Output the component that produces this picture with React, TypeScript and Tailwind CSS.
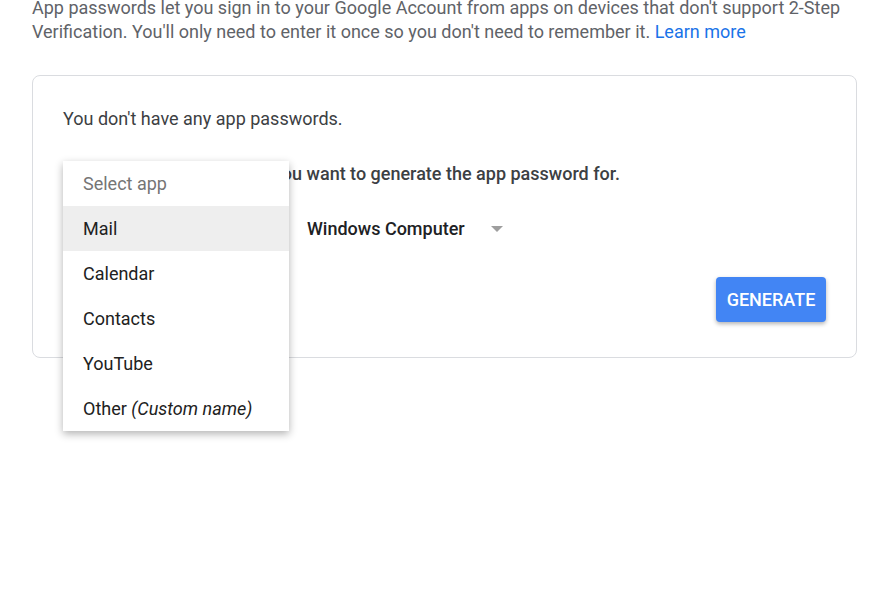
import React from "react";

const apps = ["Mail", "Calendar", "Contacts", "YouTube"];

export default function App() {
  return (
    <div className="w-[895px] h-[595px] overflow-hidden bg-white font-['Roboto',sans-serif] text-[18px]">
      <p className="-mt-1 pl-[32px] pr-[20px] leading-6 text-[#5f6368]">
        App passwords let you sign in to your Google Account from apps on devices that don't support 2-Step
        Verification. You'll only need to enter it once so you don't need to remember it.{" "}
        <a href="#" className="text-[#1a73e8]">
          Learn more
        </a>
      </p>

      <div className="ml-[32px] mt-[31px] w-[825px] rounded-lg border border-[#dadce0] px-[30px] pt-[31px] pb-[35px]">
        <p className="leading-6 text-[#3c4043]">You don't have any app passwords.</p>
        <p className="mt-[31px] leading-6 font-medium text-[#3c4043]">
          Select the app and device you want to generate the app password for.
        </p>

        <div className="relative mt-[20px] flex h-[45px] items-center">
          <div className="w-[244px]" />
          <div className="flex items-center font-medium text-[#202124]">
            <span>Windows Computer</span>
            <span className="ml-[26px] h-0 w-0 border-l-[6px] border-r-[6px] border-t-[6px] border-l-transparent border-r-transparent border-t-[#9e9e9e]" />
          </div>

          <ul className="absolute left-0 top-[-45px] z-10 w-[226px] bg-white shadow-[0_3px_8px_rgba(0,0,0,0.3)]">
            <li className="flex h-[45px] items-center px-5 text-[#757575]">Select app</li>
            {apps.map((a) => (
              <li
                key={a}
                className={`flex h-[45px] items-center px-5 text-[#212121] ${
                  a === "Mail" ? "bg-[#eeeeee]" : ""
                }`}
              >
                {a}
              </li>
            ))}
            <li className="flex h-[45px] items-center px-5 text-[#212121]">
              Other&nbsp;<i>(Custom name)</i>
            </li>
          </ul>
        </div>

        <div className="mt-[26px] flex justify-end">
          <button className="h-[45px] w-[110px] rounded bg-[#4285f4] font-medium text-white shadow-[0_2px_4px_rgba(0,0,0,0.3)]">
            GENERATE
          </button>
        </div>
      </div>
    </div>
  );
}
